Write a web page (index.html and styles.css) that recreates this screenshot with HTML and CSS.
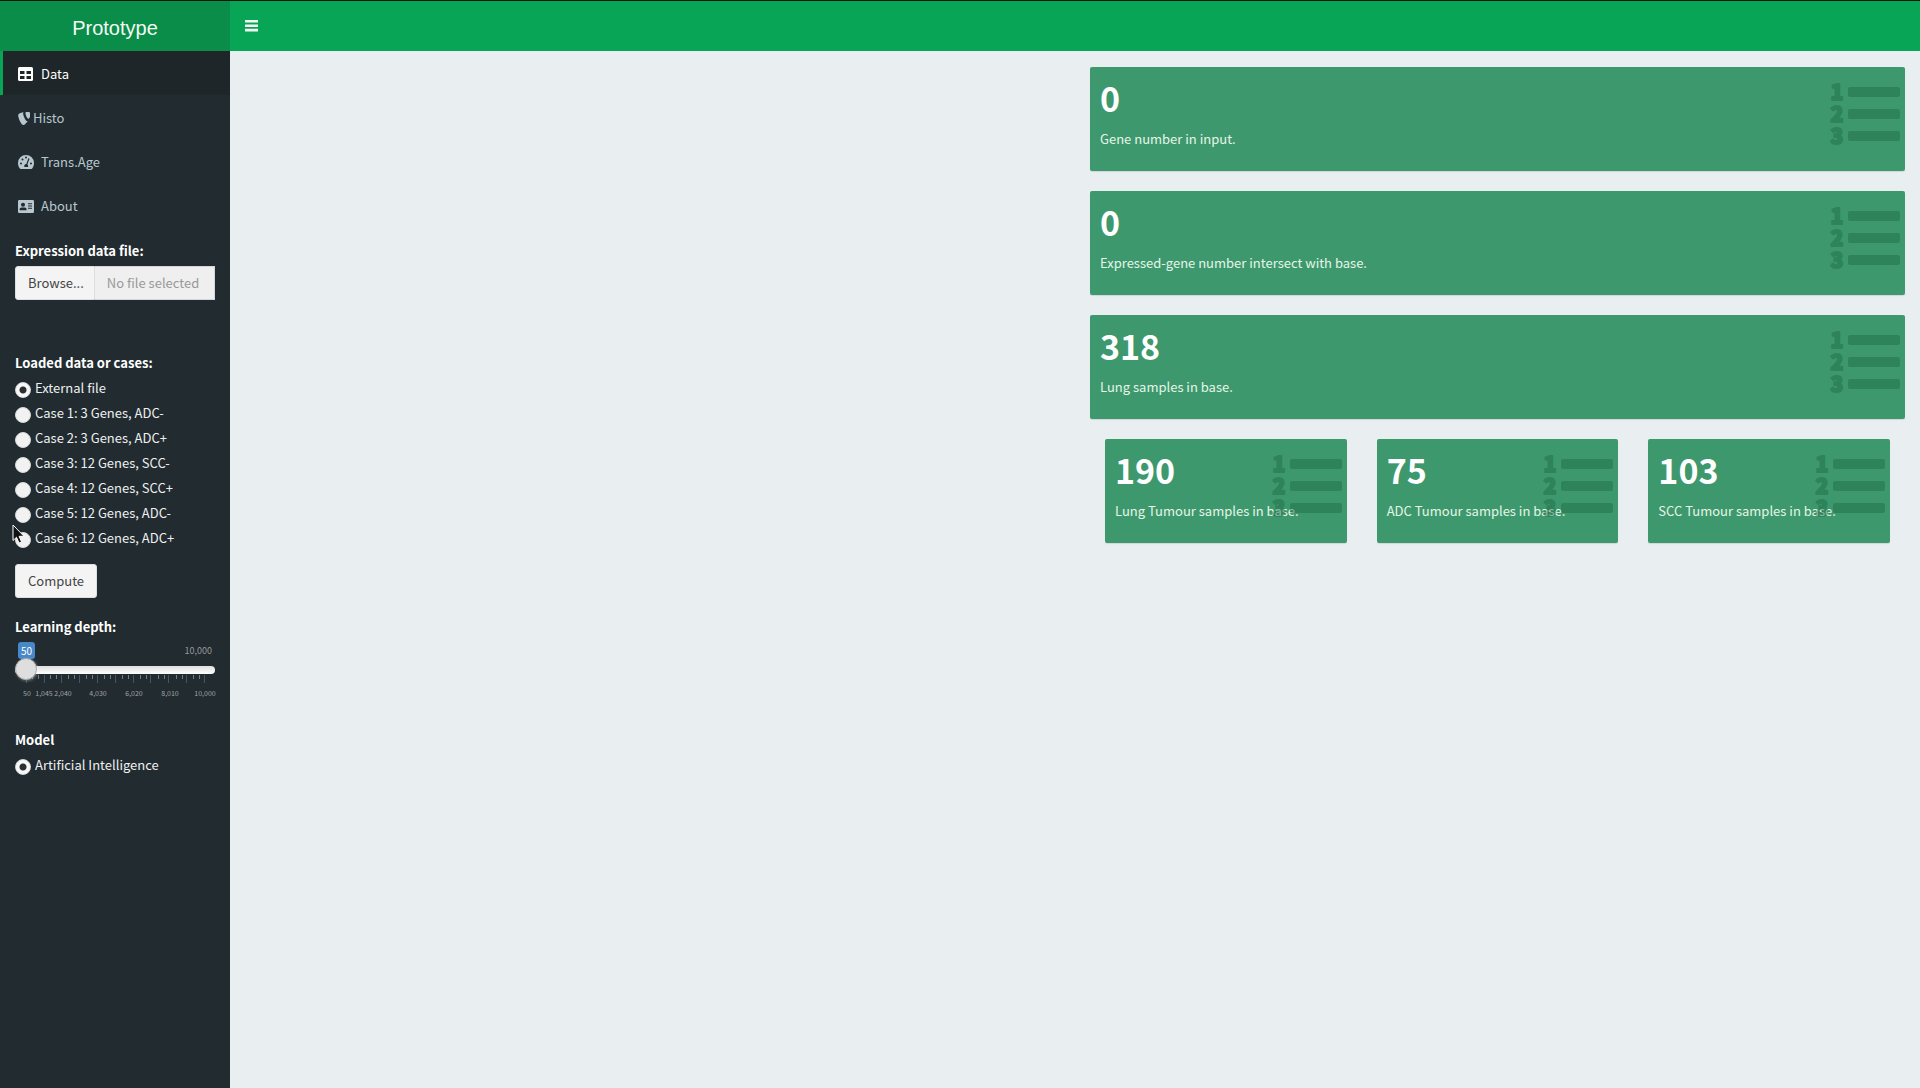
FILE: index.html
```html
<!DOCTYPE html>
<html lang="en">
<head>
<meta charset="utf-8">
<title>Prototype</title>
<link rel="stylesheet" href="styles.css">
</head>
<body>
<svg class="sprite" aria-hidden="true">
  <symbol id="list-ol" viewBox="0 0 70 66">
    <g class="digits">
      <text x="7" y="18">1</text>
      <text x="7" y="40">2</text>
      <text x="7" y="62">3</text>
    </g>
    <rect x="18" y="5" width="52" height="10" rx="2"/>
    <rect x="18" y="27" width="52" height="10" rx="2"/>
    <rect x="18" y="49" width="52" height="10" rx="2"/>
  </symbol>
</svg>
<header class="header">
  <a class="logo" href="#">Prototype</a>
  <nav class="navbar">
    <button class="toggle" type="button" aria-label="Toggle navigation">
      <svg width="13" height="12" viewBox="0 0 13 12"><path d="M0 0h13v2.600H0zM0 4.400h13v2.600H0zM0 8.800h13v2.600H0z"/></svg>
    </button>
  </nav>
</header>
<div class="wrapper">
  <aside class="sidebar">
    <nav class="menu">
      <a class="item active" href="#">
        <svg width="16" height="14" viewBox="0 0 15 14" preserveAspectRatio="xMinYMid"><path fill-rule="evenodd" d="M1.500 0h12a1.500 1.500 0 0 1 1.500 1.500v11a1.500 1.500 0 0 1-1.500 1.500h-12a1.500 1.500 0 0 1-1.500-1.500v-11a1.500 1.500 0 0 1 1.500-1.500zM2 4v3h4.500v-3zM8.500 4v3h4.500v-3zM2 9v3h4.500v-3zM8.500 9v3h4.500v-3z"/></svg>
        <span>Data</span>
      </a>
      <a class="item tight" href="#">
        <svg width="12" height="13" viewBox="0 32 416 448"><path d="M178.700 78.400c0-24.700 5.400-32.400 13.900-39.400-69.500 8.500-149.300 34-176.300 66.400-5.400 7.700-9.300 20.800-9.300 37.100C7 246 113.800 480 191.100 480c36.300 0 97.300-59.500 146.700-139-7 2.300-11.600 2.300-18.500 2.300-57.200 0-140.600-198.500-140.600-264.900zM301.500 32c-30.100 0-41.700 5.400-41.700 36.300 0 66.400 53.800 198.500 101.700 198.500 26.300 0 78.800-99.700 78.800-182.300 0-40.900-67-52.500-138.800-52.500z"/></svg>
        <span>Histo</span>
      </a>
      <a class="item" href="#">
        <svg width="16" height="14" viewBox="0 0 16 14"><path fill-rule="evenodd" d="M8 0a8 8 0 0 1 8 8c0 2-.6 3.800-1.600 5.300-.3.500-.7.700-1.200.7H2.800c-.5 0-.9-.2-1.200-.7A9 9 0 0 1 0 8a8 8 0 0 1 8-8zM8 1.500a1 1 0 1 0 0 2 1 1 0 0 0 0-2zM3 7.500a1 1 0 1 0 0 2 1 1 0 0 0 0-2zM4.500 3.500a1 1 0 1 0 0 2 1 1 0 0 0 0-2zM13 7.500a1 1 0 1 0 0 2 1 1 0 0 0 0-2zM10.300 3.600 8.300 9a2 2 0 0 0-1.800 3h3.400a2 2 0 0 0-.5-2.500l2-5.400c.2-.8-.8-1.200-1.100-.5z"/></svg>
        <span>Trans.Age</span>
      </a>
      <a class="item" href="#">
        <svg width="16" height="13" viewBox="0 0 16 13"><path fill-rule="evenodd" d="M1.300 0h13.400A1.300 1.300 0 0 1 16 1.300v10.400a1.300 1.300 0 0 1-1.300 1.300H1.300A1.300 1.300 0 0 1 0 11.700V1.300A1.300 1.300 0 0 1 1.300 0zM5 2.800a2 2 0 1 0 0 4 2 2 0 0 0 0-4zM2 10.200h6.200c.3 0 .4-.2.400-.5 0-1.200-.8-2.100-2-2.100H3.600c-1.200 0-2 .9-2 2.100 0 .3.100.5.400.5zM10 3.300v1h4v-1zM10 5.500v1h4v-1zM10 7.700v1h4v-1z"/></svg>
        <span>About</span>
      </a>
    </nav>
    <form class="form">
      <div class="group file-group">
        <label class="title" for="file-name">Expression data file:</label>
        <div class="file">
          <label class="button browse">Browse...<input class="hidden-file" type="file"></label>
          <input class="file-name" id="file-name" type="text" placeholder="No file selected" readonly>
        </div>
      </div>
      <fieldset class="group">
        <legend class="title">Loaded data or cases:</legend>
        <label class="option"><input type="radio" name="case" checked><span>External file</span></label>
        <label class="option"><input type="radio" name="case"><span>Case 1: 3 Genes, ADC-</span></label>
        <label class="option"><input type="radio" name="case"><span>Case 2: 3 Genes, ADC+</span></label>
        <label class="option"><input type="radio" name="case"><span>Case 3: 12 Genes, SCC-</span></label>
        <label class="option"><input type="radio" name="case"><span>Case 4: 12 Genes, SCC+</span></label>
        <label class="option"><input type="radio" name="case"><span>Case 5: 12 Genes, ADC-</span></label>
        <label class="option"><input type="radio" name="case"><span>Case 6: 12 Genes, ADC+</span></label>
      </fieldset>
      <button class="button compute" type="button">Compute</button>
      <div class="group depth-group">
        <label class="title" for="depth">Learning depth:</label>
        <div class="bounds"><output class="value" for="depth">50</output><span class="max">10,000</span></div>
        <input class="range" id="depth" type="range" min="50" max="10000" value="50">
        <svg class="scale" width="206" height="24" viewBox="0 0 206 24">
          <path class="minor" d="M17 0v4M23 0v4M35 0v4M41 0v4M53 0v4M59 0v4M71 0v4M77 0v4M89 0v4M95 0v4M107 0v4M113 0v4M125 0v4M131 0v4M143 0v4M149 0v4M161 0v4M167 0v4M178 0v4M184 0v4" transform="translate(.5)"/>
          <path class="major" d="M11 0v8M29 0v8M46 0v8M64 0v8M82 0v8M100 0v8M118 0v8M135 0v8M153 0v8M171 0v8M189 0v8" transform="translate(.5)"/>
          <text x="12" y="21">50</text>
          <text x="29" y="21">1,045</text>
          <text x="48" y="21">2,040</text>
          <text x="83" y="21">4,030</text>
          <text x="119" y="21">6,020</text>
          <text x="155" y="21">8,010</text>
          <text x="190" y="21">10,000</text>
        </svg>
      </div>
      <fieldset class="group">
        <legend class="title">Model</legend>
        <label class="option"><input type="radio" name="model" checked><span>Artificial Intelligence</span></label>
      </fieldset>
    </form>
  </aside>
  <main class="content">
    <div class="stats">
      <section class="box"><h3>0</h3><p>Gene number in input.</p><svg class="icon"><use href="#list-ol"/></svg></section>
      <section class="box"><h3>0</h3><p>Expressed-gene number intersect with base.</p><svg class="icon"><use href="#list-ol"/></svg></section>
      <section class="box"><h3>318</h3><p>Lung samples in base.</p><svg class="icon"><use href="#list-ol"/></svg></section>
      <div class="trio">
        <section class="box"><h3>190</h3><p>Lung Tumour samples in base.</p><svg class="icon"><use href="#list-ol"/></svg></section>
        <section class="box"><h3>75</h3><p>ADC Tumour samples in base.</p><svg class="icon"><use href="#list-ol"/></svg></section>
        <section class="box"><h3>103</h3><p>SCC Tumour samples in base.</p><svg class="icon"><use href="#list-ol"/></svg></section>
      </div>
    </div>
  </main>
</div>
<svg class="pointer" width="14" height="21" viewBox="0 0 14 21" aria-hidden="true"><path d="M1 1v15.500l3.500-3.200 2.500 5.700 2.600-1.100-2.500-5.600h4.900z"/></svg>
</body>
</html>
```

FILE: styles.css
```css
* { box-sizing: border-box; }

body {
  margin: 0;
  min-height: 100vh;
  display: flex;
  flex-direction: column;
  border-top: 1px solid #06170e;
  background: #e9eef1;
  color: #fff;
  font: 13px/20px "Noto Sans CJK SC", "Open Sans", sans-serif;
}

.sprite { display: none; }

.header { display: flex; height: 50px; }

.logo {
  width: 230px;
  background: #098d49;
  color: #f4fbf4;
  font: 20px/54px "Liberation Sans", Arial, sans-serif;
  text-align: center;
  text-decoration: none;
}

.navbar { flex: 1; background: #08a556; }

.toggle {
  display: flex;
  padding: 19px 15px;
  border: 0;
  background: transparent;
  fill: #f4fbf4;
}

.wrapper { display: flex; flex: 1; }

.sidebar { width: 230px; flex: none; background: #212b30; }

.menu { display: flex; flex-direction: column; }

.item {
  display: flex;
  align-items: center;
  gap: 7px;
  padding: 13px 5px 11px 15px;
  border-left: 3px solid transparent;
  color: #b8c7ce;
  fill: #b8c7ce;
  text-decoration: none;
}

.item.tight { gap: 3px; }

.item.active {
  border-color: #08a556;
  background: #1e2629;
  color: #fff;
  fill: #fff;
}

.form { padding: 14px 15px; }

.group { margin: 0; padding: 0; border: 0; }

.title {
  display: block;
  padding: 0;
  margin-bottom: 5px;
  font-weight: 700;
}

.file-group { margin-bottom: 53px; }

.file { display: flex; height: 34px; }

.button {
  height: 34px;
  padding: 6px 12px;
  border: 1px solid #dde0e0;
  border-radius: 3px;
  background: #f3f4f3;
  color: #444;
  font: inherit;
}

.browse { padding-right: 10px; border-radius: 3px 0 0 3px; }

.hidden-file { position: absolute; width: 1px; height: 1px; opacity: 0; }

.file-name {
  flex: 1;
  min-width: 0;
  padding: 6px 12px;
  border: 1px solid #d2d6de;
  border-left: 0;
  background: #eeefee;
  font: inherit;
}

.file-name::placeholder { color: #999; opacity: 1; }

.option { display: flex; gap: 4px; margin-bottom: 5px; color: #eef0f0; }

.option input {
  appearance: none;
  width: 16px;
  height: 16px;
  margin: 4px 0 0;
  border: 1px solid #d8d8d8;
  border-radius: 50%;
  background: #f3f2f2;
}

.option input:checked { background: radial-gradient(circle, #2b3033 3px, #f8f8f8 4px); }

.compute { margin: 11px 0 19px; }

.depth-group { margin-bottom: 31px; }

.bounds {
  display: flex;
  justify-content: space-between;
  padding: 0 3px;
  font-size: 10px;
  line-height: 17px;
}

.value { padding: 0 3px; border-radius: 3px; background: #4688c9; }

.max { color: #999; font-size: 9px; }

.range {
  appearance: none;
  display: block;
  position: relative;
  width: 100%;
  height: 22px;
  margin: 0;
  background: transparent;
}

.range::-webkit-slider-runnable-track {
  height: 8px;
  border-radius: 8px;
  background: linear-gradient(#dedede, #fff);
}

.range::-webkit-slider-thumb {
  appearance: none;
  width: 22px;
  height: 22px;
  margin-top: -8px;
  border: 1px solid #aaa;
  border-radius: 50%;
  background: #dedede;
  box-shadow: 1px 1px 3px rgba(255, 255, 255, .3);
}

.scale { display: block; margin-top: -6px; overflow: visible; }

.minor { stroke: #6f7d84; }

.major { stroke: #40586c; }

.scale text { fill: #a4a4a4; font-size: 7px; text-anchor: middle; }

.content { flex: 1; display: grid; grid-template-columns: 1fr 1fr; padding: 16px 15px; gap: 30px; }

.stats { grid-column: 2; display: flex; flex-direction: column; gap: 20px; }

.trio { display: grid; grid-template-columns: repeat(3, 1fr); gap: 30px; padding: 0 15px; }

.box {
  position: relative;
  padding: 10px 10px 21px;
  border-radius: 2px;
  background: #3d996d;
  box-shadow: 0 1px 1px rgba(0, 0, 0, .1);
}

.box h3 { margin: 0 0 9px; font-size: 34px; line-height: 42px; font-weight: 700; }

.box p { margin: 0; color: #e6f5e9; font-size: 13px; line-height: 22px; }

.icon {
  position: absolute;
  top: 15px;
  right: 5px;
  width: 70px;
  height: 66px;
  fill: #1e6a47;
  stroke: #1e6a47;
  stroke-width: 0;
  opacity: .45;
}

.digits { font-size: 21px; font-weight: 900; text-anchor: middle; stroke-width: 2px; stroke-linejoin: round; }

.pointer { position: absolute; left: 12px; top: 524px; fill: #111; stroke: #fff; }
```
